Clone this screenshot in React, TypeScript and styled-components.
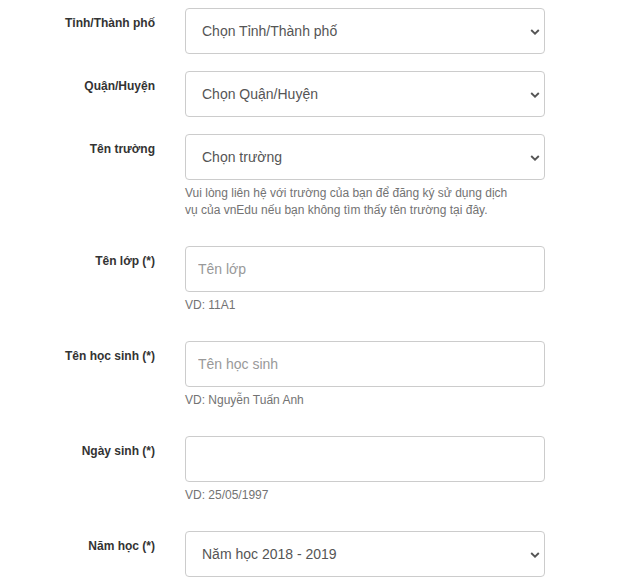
import { createGlobalStyle, styled } from "styled-components";

const GlobalStyle = createGlobalStyle`
    html, body {
        margin: 0;
        padding: 0;
        background: #fff;
    }
    body {
        font-family: "Liberation Sans", Arial, sans-serif;
        color: #333;
    }
`

const Form = styled.form`
    width: 620px;
    padding-top: 8px;
    box-sizing: border-box;
`

const Group = styled.div`
    display: grid;
    grid-template-columns: 155px 360px;
    column-gap: 30px;
    margin-bottom: 17px;
`

const Label = styled.label`
    font-size: 12px;
    font-weight: 700;
    color: #333;
    text-align: right;
    padding-top: 7px;
    line-height: 17px;
`

const Field = styled.div`
    display: flex;
    flex-direction: column;
`

const SelectWrap = styled.div`
    position: relative;
`

const Select = styled.select`
    appearance: none;
    width: 100%;
    height: 46px;
    box-sizing: border-box;
    border: 1px solid #ccc;
    border-radius: 4px;
    background: #fff;
    padding: 0 30px 0 16px;
    font-family: "Liberation Sans", Arial, sans-serif;
    font-size: 14px;
    color: #555;
    outline: none;
`

const Chevron = styled.svg`
    position: absolute;
    right: 5px;
    top: 21px;
    pointer-events: none;
`

const Input = styled.input`
    width: 100%;
    height: 46px;
    box-sizing: border-box;
    border: 1px solid #ccc;
    border-radius: 4px;
    padding: 0 12px;
    font-family: "Liberation Sans", Arial, sans-serif;
    font-size: 14px;
    color: #555;
    outline: none;
    &::placeholder {
        color: #999;
    }
`

const Help = styled.p`
    margin: 5px 0 10px;
    font-size: 12px;
    line-height: 17px;
    color: #737373;
`

type Row = {
    label: string
    kind: "select" | "input"
    value: string
    help?: string[]
}

const rows: Row[] = [
    { label: "Tỉnh/Thành phố", kind: "select", value: "Chọn Tỉnh/Thành phố" },
    { label: "Quận/Huyện", kind: "select", value: "Chọn Quận/Huyện" },
    {
        label: "Tên trường",
        kind: "select",
        value: "Chọn trường",
        help: [
            "Vui lòng liên hệ với trường của bạn để đăng ký sử dụng dịch",
            "vụ của vnEdu nếu bạn không tìm thấy tên trường tại đây.",
        ],
    },
    { label: "Tên lớp (*)", kind: "input", value: "Tên lớp", help: ["VD: 11A1"] },
    { label: "Tên học sinh (*)", kind: "input", value: "Tên học sinh", help: ["VD: Nguyễn Tuấn Anh"] },
    { label: "Ngày sinh (*)", kind: "input", value: "", help: ["VD: 25/05/1997"] },
    { label: "Năm học (*)", kind: "select", value: "Năm học 2018 - 2019" },
]

function DropDown({ value }: { value: string }) {
    return (
        <SelectWrap>
            <Select defaultValue={value}>
                <option>{value}</option>
            </Select>
            <Chevron width="10" height="6" viewBox="0 0 10 6">
                <polyline points="1.2,1 5,4.6 8.8,1" fill="none" stroke="#555" strokeWidth="1.9" />
            </Chevron>
        </SelectWrap>
    )
}

export default function App() {
    return (
        <>
            <GlobalStyle />
            <Form>
                {rows.map((r) => (
                    <Group key={r.label}>
                        <Label>{r.label}</Label>
                        <Field>
                            {r.kind === "select" ? <DropDown value={r.value} /> : <Input placeholder={r.value} />}
                            {r.help ? (
                                <Help>
                                    {r.help.map((line, i) => (
                                        <span key={i}>
                                            {line}
                                            {i < r.help!.length - 1 ? <br /> : null}
                                        </span>
                                    ))}
                                </Help>
                            ) : null}
                        </Field>
                    </Group>
                ))}
            </Form>
        </>
    )
}
